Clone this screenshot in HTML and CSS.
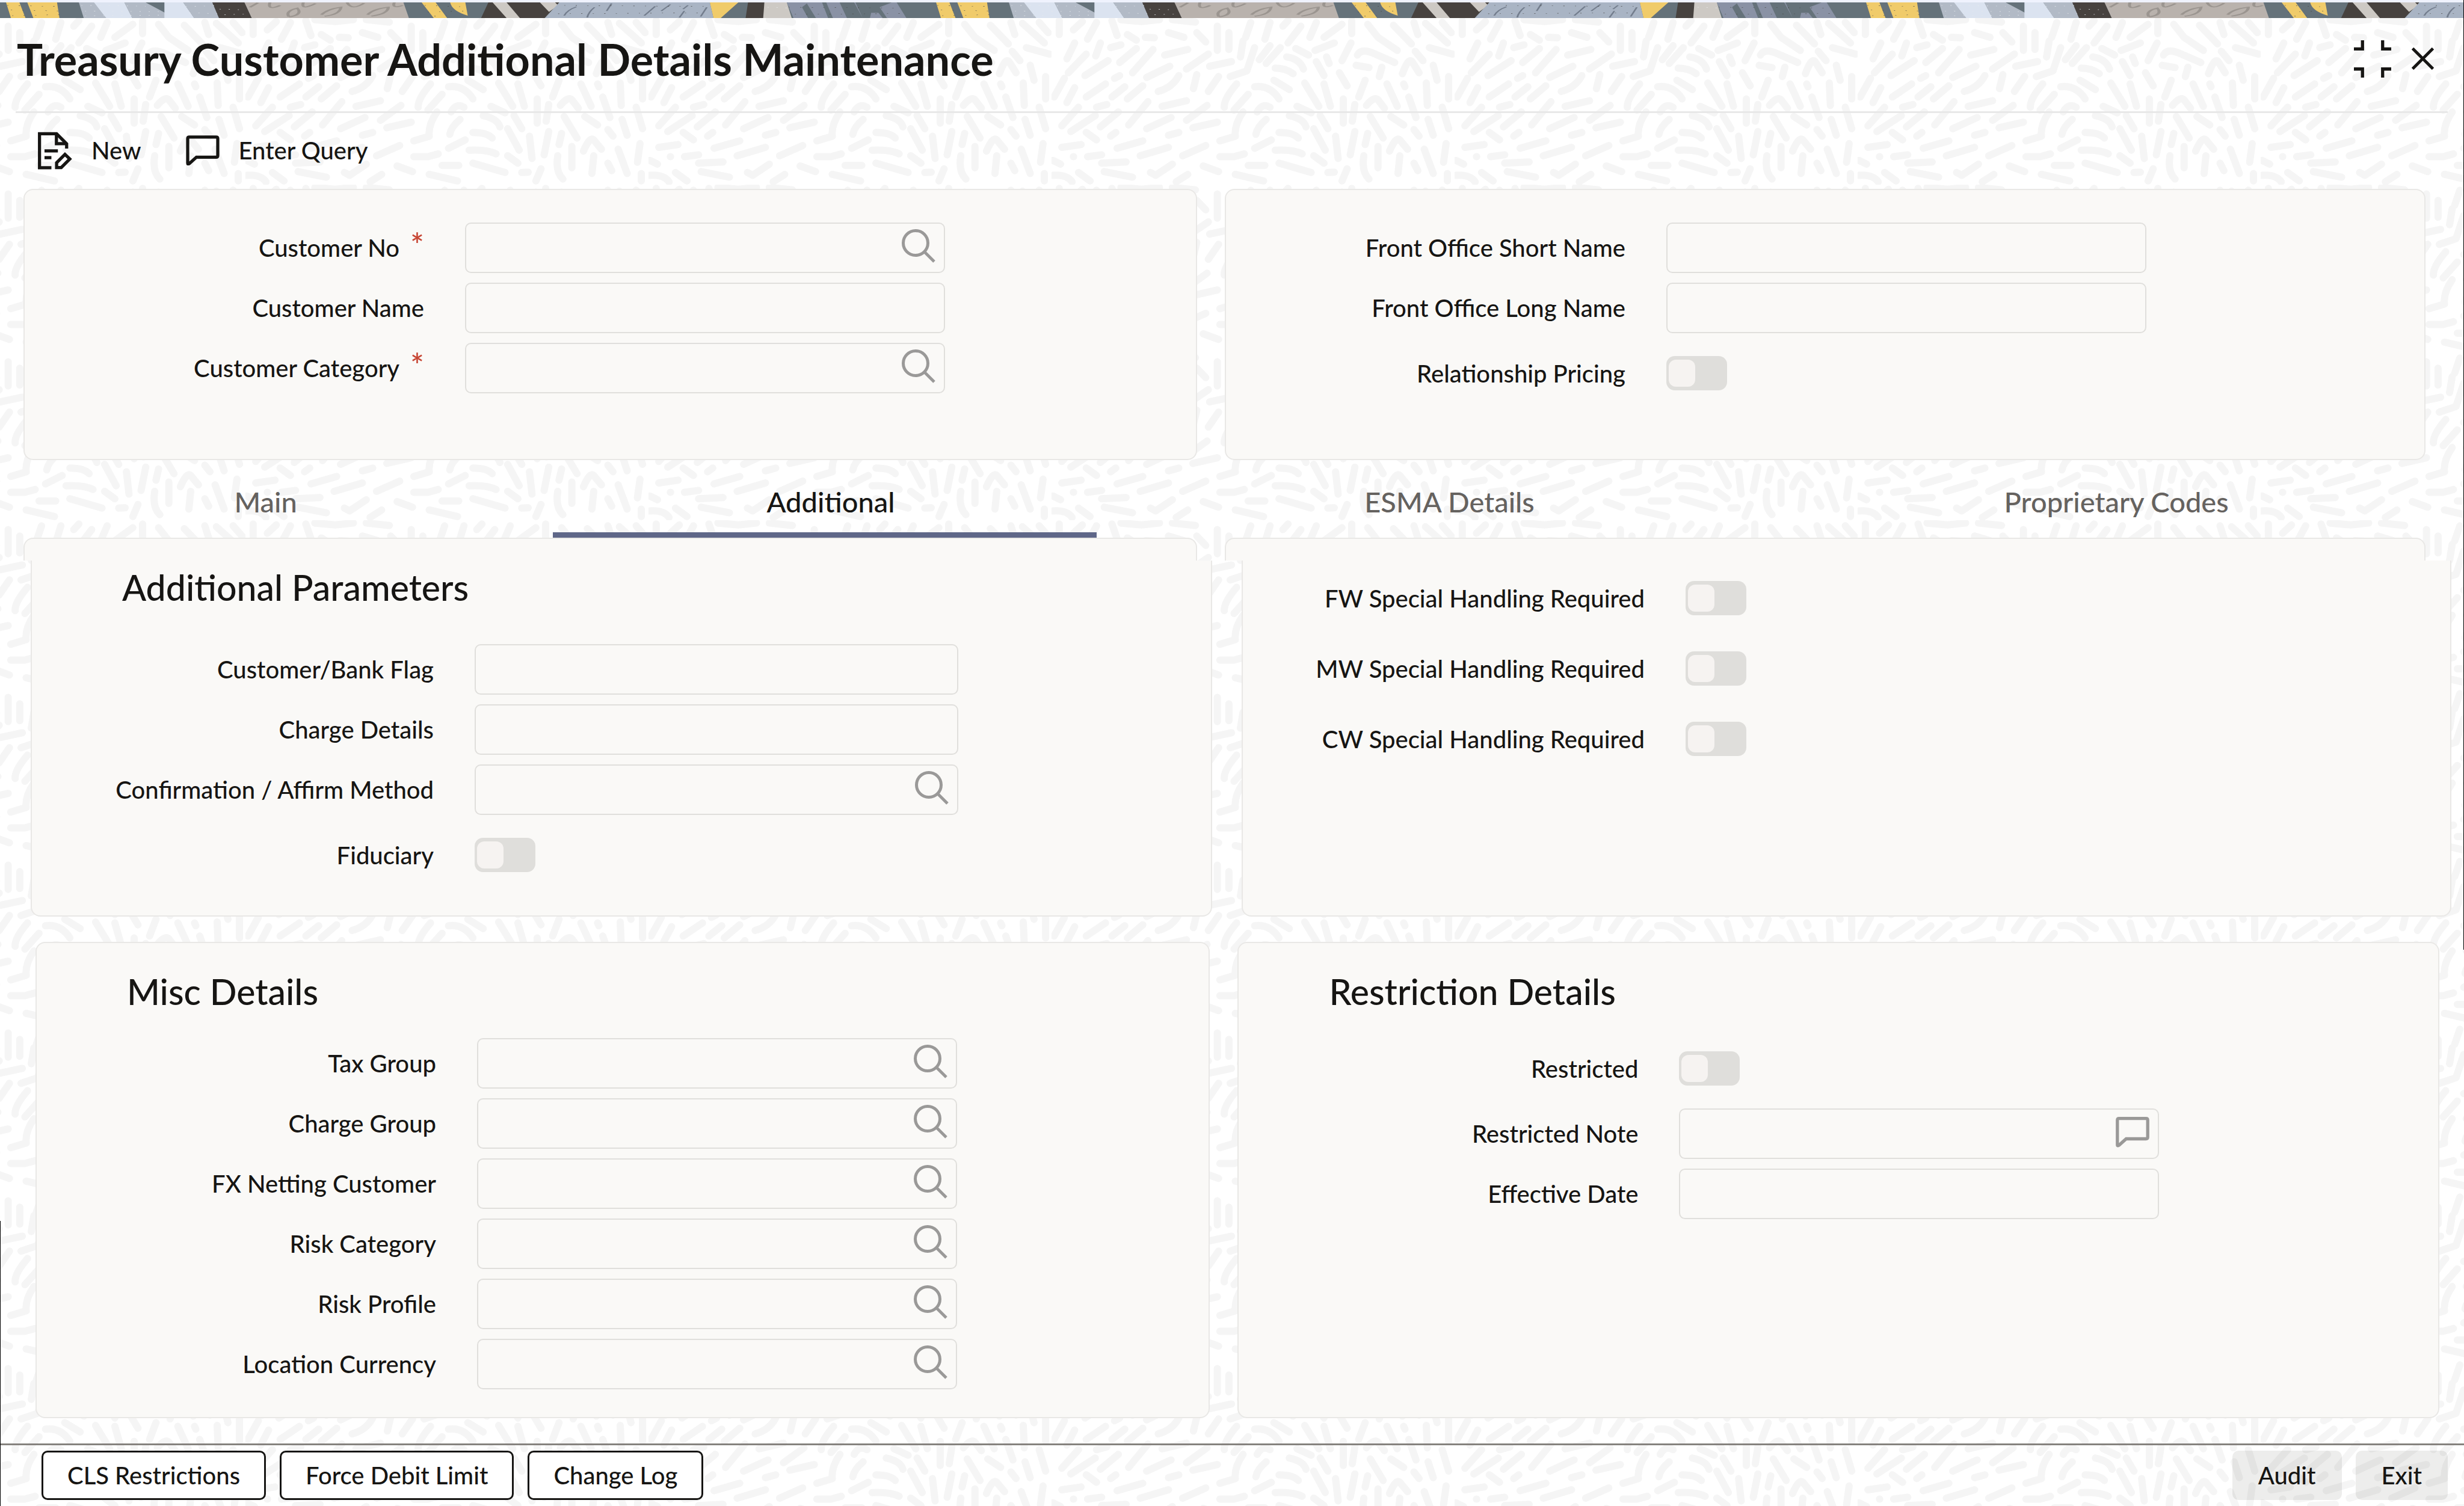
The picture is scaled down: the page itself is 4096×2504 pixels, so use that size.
FILE: index.html
```html
<!DOCTYPE html>
<html lang="en">
<head>
    <meta charset="utf-8">
    <title>Treasury Customer Additional Details Maintenance</title>
    <link rel="stylesheet" href="styles.css">
</head>
<body>

    <!-- Shared icons -->
    <svg class="sprite" aria-hidden="true">
        <symbol id="icon-search" viewBox="0 0 56 56">
            <circle cx="23" cy="23" r="20.500" fill="none" stroke="currentColor" stroke-width="5"/>
            <path d="M38 38L54 54" fill="none" stroke="currentColor" stroke-width="5"/>
        </symbol>
        <symbol id="icon-note" viewBox="0 0 180 162">
            <path d="M9 150V18Q9 9 18 9H162Q171 9 171 18V109Q171 118 162 118H56L18 152Q9 158 9 150Z" fill="none" stroke="currentColor" stroke-width="17"/>
        </symbol>
        <symbol id="icon-new" viewBox="80 40 186 204">
            <g fill="none" stroke="currentColor" stroke-width="17">
                <path d="M155 234H91V51H183L237 105V131"/>
                <path d="M182 51V104H236"/>
                <path d="M118 143H190M118 180H155"/>
                <path d="M183 233V207L228 162L254 187L208 233Z"/>
            </g>
        </symbol>
        <symbol id="icon-restore" viewBox="0 0 200 200">
            <path d="M0 46H46V0M154 0V46H200M0 154H46V200M154 200V154H200" fill="none" stroke="currentColor" stroke-width="17"/>
        </symbol>
        <symbol id="icon-close" viewBox="0 0 120 120">
            <path d="M5 5L115 115M115 5L5 115" fill="none" stroke="currentColor" stroke-width="16"/>
        </symbol>
    </svg>

    <div class="page">
        <div class="banner"></div>

        <header class="header">
            <h1>Treasury Customer Additional Details Maintenance</h1>
            <div class="window-buttons">
                <button class="restore" aria-label="Restore"><svg><use href="#icon-restore"/></svg></button>
                <button class="close" aria-label="Close"><svg><use href="#icon-close"/></svg></button>
            </div>
        </header>

        <div class="toolbar">
            <button><svg class="new"><use href="#icon-new"/></svg>New</button>
            <button><svg class="note"><use href="#icon-note"/></svg>Enter Query</button>
        </div>

        <main>
            <!-- Customer -->
            <div class="columns">
                <section class="panel">
                    <div class="row required">
                        <label for="customerNo">Customer No</label>
                        <div class="control"><input type="text" id="customerNo"><button aria-label="Search Customer No"><svg><use href="#icon-search"/></svg></button></div>
                    </div>
                    <div class="row">
                        <label for="customerName">Customer Name</label>
                        <div class="control"><input type="text" id="customerName"></div>
                    </div>
                    <div class="row required">
                        <label for="customerCategory">Customer Category</label>
                        <div class="control"><input type="text" id="customerCategory"><button aria-label="Search Customer Category"><svg><use href="#icon-search"/></svg></button></div>
                    </div>
                </section>
                <section class="panel">
                    <div class="row">
                        <label for="shortName">Front Office Short Name</label>
                        <div class="control"><input type="text" id="shortName"></div>
                    </div>
                    <div class="row">
                        <label for="longName">Front Office Long Name</label>
                        <div class="control"><input type="text" id="longName"></div>
                    </div>
                    <div class="row switch-row">
                        <label for="pricing">Relationship Pricing</label>
                        <input type="checkbox" class="switch" id="pricing">
                    </div>
                </section>
            </div>

            <nav class="tabs" role="tablist">
                <button role="tab">Main</button>
                <button role="tab" class="active" aria-selected="true">Additional</button>
                <button role="tab">ESMA Details</button>
                <button role="tab">Proprietary Codes</button>
            </nav>

            <!-- Additional tab -->
            <div class="columns lip">
                <div class="panel"></div>
                <div class="panel"></div>
            </div>
            <div class="columns parameters">
                <section class="panel">
                    <h2>Additional Parameters</h2>
                    <div class="row">
                        <label for="bankFlag">Customer/Bank Flag</label>
                        <div class="control"><input type="text" id="bankFlag"></div>
                    </div>
                    <div class="row">
                        <label for="chargeDetails">Charge Details</label>
                        <div class="control"><input type="text" id="chargeDetails"></div>
                    </div>
                    <div class="row">
                        <label for="affirmMethod">Confirmation / Affirm Method</label>
                        <div class="control"><input type="text" id="affirmMethod"><button aria-label="Search Method"><svg><use href="#icon-search"/></svg></button></div>
                    </div>
                    <div class="row switch-row">
                        <label for="fiduciary">Fiduciary</label>
                        <input type="checkbox" class="switch" id="fiduciary">
                    </div>
                </section>
                <section class="panel">
                    <div class="row switch-row">
                        <label for="fw">FW Special Handling Required</label>
                        <input type="checkbox" class="switch" id="fw">
                    </div>
                    <div class="row switch-row">
                        <label for="mw">MW Special Handling Required</label>
                        <input type="checkbox" class="switch" id="mw">
                    </div>
                    <div class="row switch-row">
                        <label for="cw">CW Special Handling Required</label>
                        <input type="checkbox" class="switch" id="cw">
                    </div>
                </section>
            </div>

            <div class="columns details">
                <section class="panel">
                    <h2>Misc Details</h2>
                    <div class="row">
                        <label for="taxGroup">Tax Group</label>
                        <div class="control"><input type="text" id="taxGroup"><button aria-label="Search Tax Group"><svg><use href="#icon-search"/></svg></button></div>
                    </div>
                    <div class="row">
                        <label for="chargeGroup">Charge Group</label>
                        <div class="control"><input type="text" id="chargeGroup"><button aria-label="Search Charge Group"><svg><use href="#icon-search"/></svg></button></div>
                    </div>
                    <div class="row">
                        <label for="fxNetting">FX Netting Customer</label>
                        <div class="control"><input type="text" id="fxNetting"><button aria-label="Search FX Netting Customer"><svg><use href="#icon-search"/></svg></button></div>
                    </div>
                    <div class="row">
                        <label for="riskCategory">Risk Category</label>
                        <div class="control"><input type="text" id="riskCategory"><button aria-label="Search Risk Category"><svg><use href="#icon-search"/></svg></button></div>
                    </div>
                    <div class="row">
                        <label for="riskProfile">Risk Profile</label>
                        <div class="control"><input type="text" id="riskProfile"><button aria-label="Search Risk Profile"><svg><use href="#icon-search"/></svg></button></div>
                    </div>
                    <div class="row">
                        <label for="currency">Location Currency</label>
                        <div class="control"><input type="text" id="currency"><button aria-label="Search Location Currency"><svg><use href="#icon-search"/></svg></button></div>
                    </div>
                </section>
                <section class="panel">
                    <h2>Restriction Details</h2>
                    <div class="row switch-row">
                        <label for="restricted">Restricted</label>
                        <input type="checkbox" class="switch" id="restricted">
                    </div>
                    <div class="row">
                        <label for="restrictedNote">Restricted Note</label>
                        <div class="control"><input type="text" id="restrictedNote"><button aria-label="Edit Restricted Note"><svg><use href="#icon-note"/></svg></button></div>
                    </div>
                    <div class="row">
                        <label for="effectiveDate">Effective Date</label>
                        <div class="control"><input type="text" id="effectiveDate"></div>
                    </div>
                </section>
            </div>
        </main>

        <footer class="footer">
            <button>CLS Restrictions</button>
            <button>Force Debit Limit</button>
            <button>Change Log</button>
            <button class="plain first">Audit</button>
            <button class="plain">Exit</button>
        </footer>
    </div>

</body>
</html>
```
FILE: styles.css
```css
* { box-sizing: border-box; }
body { margin: 0; font-family: Lato, "Noto Sans", sans-serif; font-size: 40px; font-weight: 500; line-height: 52px; color: #161513; background-color: white; }
button, input { font: inherit; color: inherit; margin: 0; }
button { background: none; border: none; padding: 0; cursor: pointer; }
svg { display: block; }
.sprite { display: none; }

.page {
    position: relative; min-height: 100vh; display: flex; flex-direction: column;
    background-position: 2418px 28px; background-size: 670px 279px;
    background-image: url("data:image/svg+xml,<svg xmlns='http://www.w3.org/2000/svg' viewBox='0 0 1568 900' preserveAspectRatio='none'><path vector-effect='non-scaling-stroke' fill='none' stroke='%23f5f5f5' stroke-width='12' stroke-linecap='round' stroke-linejoin='round' d='M30 20V95M85 70L120 25M140 120L175 30M235 20L255 100M270 15L350 25L420 15M470 15L560 28M295 95L330 125M365 110L400 112M455 85L515 110M565 85L600 135M645 50V180M690 85V175M775 30L755 110M850 30L830 120M900 50L920 20M970 50L920 140M1030 30L1005 110M1130 40L1060 110M1168 20V90M230 165L270 150M90 140L60 225M190 140L172 210M135 200L65 300M330 170L265 245M395 175L315 300M440 205L530 175M610 200L525 280M745 130L735 215M850 155L808 230M890 165L835 250M950 170L1000 205M1025 180L1100 140M1165 140L1130 235M1070 215L1080 250M1230 40L1270 110L1345 180M1330 45L1400 145M1410 30L1425 95M1455 35L1540 140M1520 30L1555 85M1470 165L1560 200M1190 205Q1205 165 1260 200L1335 245M1415 185L1445 235M1365 305Q1390 210 1405 245L1430 300M220 235L130 315M460 265L370 325M615 265L700 240M790 165L760 290L695 320M915 215Q965 225 980 280M870 275Q910 275 940 305M1030 240L1060 315M1185 260L1235 272M1285 270L1275 320M1485 260L1500 340M50 330L10 430M245 330L265 315M495 315Q470 380 415 400M565 310L552 385M650 320L610 400M865 340L925 390M1120 300L1150 370M985 355L1040 480M1060 360L1085 480M1220 340L1195 430M1305 360L1345 480M1370 360L1375 375M1458 355L1462 475M1545 320V440M210 360L135 430M285 375L235 430M90 380L60 460M355 370L295 440M720 360Q670 440 672 485M765 415L710 500M790 375Q850 365 885 440M1225 475Q1255 425 1270 445L1295 490M1390 430L1418 540M175 485L215 470M375 455L300 580M430 480L525 450M605 475L525 555M800 510Q820 460 850 485M955 480L1010 515M1135 440V570M1180 470L1170 560M1520 485L1545 600M105 485L40 585M170 530L75 615M260 510L190 590M465 540L370 600M550 595L645 565M745 510Q710 580 715 640L655 665M835 550Q800 590 795 630M925 530Q980 545 990 590M1045 530L1075 600M1240 535L1290 650M1320 535L1370 580M1465 550L1485 635M1410 605L1430 640M135 620L175 660M230 640L250 620M455 635L495 620M855 660L790 705M885 620Q940 620 960 650M1020 600L1065 715M1105 640L1115 760M1180 615L1162 740M1230 625L1220 685M1315 720Q1340 640 1355 660L1385 710M40 700L115 685M255 705L355 665M345 745L455 700M600 690L510 745M870 715Q940 710 975 735M655 750H710L750 735M85 750H86M140 750L195 740M1020 745L1060 785M1270 695V810M1450 710L1485 840M1535 680L1525 780M5 770L35 790M195 785L290 778M205 830L315 860M470 790L405 850L385 835M590 800L650 830M765 797H830M885 785L1010 835M715 845L825 880M1075 835L1100 833M1150 815L1130 880M1215 745Q1205 830 1235 870M1355 745L1348 840M1410 785L1425 825M1540 840V880M5 850Q60 845 80 885M105 835L150 880M530 845L485 885'/></svg>");
}
/* Window edges */
.page::before, .page::after { content: ""; position: absolute; width: 1px; background-color: black; }
.page::before { left: 0; top: 81%; bottom: 0; }
.page::after { right: 0; top: 0; height: 63%; }

.banner {
    height: 30px; border-top: 4px solid #eff2fd; background-size: 1546px 26px;
    background-image: url("data:image/svg+xml,<svg xmlns='http://www.w3.org/2000/svg' viewBox='0 14 1533 84' preserveAspectRatio='none'><path fill='%2365727a' d='M0 14H1533V98H0Z'/><path fill='%23f0cb6a' d='M10 14L18 98H42L32 14ZM45 14L55 98H98L94 14ZM695 14L715 98H737L718 14ZM742 14Q745 60 771 85L767 14ZM1170 14L1176 98H1188L1217 14Z'/><path fill='%23b2bac6' d='M130 14L138 98H175L158 14ZM205 14L218 98H272V70L240 14ZM302 14L320 98H361L350 14Z'/><path fill='%23dbe3f0' d='M155 14L175 98H218L205 14ZM271 14V98H320L302 14Z'/><path fill='%2347423f' d='M350 14L361 98H415L403 14ZM805 14L793 98H898L922 14ZM1233 14L1229 98H1260V14Z'/><path fill='%23b9b2ad' d='M403 14L415 98H674L665 14Z'/><path fill='%23cdc9c4' d='M812 14L835 98H857L835 14ZM890 14L905 65L920 30L915 14ZM1260 14L1258 98H1305L1297 14Z'/><path fill='%23a9b4c4' d='M922 14L898 98H1176L1170 14Z'/><path fill='%238a92a5' d='M1297 14L1308 98H1332L1322 40L1330 20L1345 98H1365L1355 14ZM1362 14L1373 98H1396L1384 14ZM1408 14L1422 98H1455L1448 70H1436L1434 98H1422L1410 14H1470L1450 40L1462 98H1494L1478 14Z'/><path fill='none' stroke='%239b9590' stroke-width='5' d='M412 40L425 16M445 14Q440 60 462 30M476 90Q470 60 490 45Q500 80 476 92M500 14Q495 60 520 20M530 80Q540 50 562 40Q560 80 535 88M572 14Q580 60 600 18M606 80Q615 50 640 40Q640 75 612 88M650 14Q645 50 664 30'/><path fill='none' stroke='%23737d8d' stroke-width='3' d='M930 85Q935 55 950 38M968 95Q970 65 980 40M1000 60L1008 20M1062 85L1080 35M1090 60L1105 25M1120 95L1128 60M1126 50L1134 30M1155 90L1165 40'/><path fill='none' stroke='%234a4a48' stroke-width='2' stroke-dasharray='2 17' d='M12 30L96 36M18 55L98 60M20 85L98 80M700 30L770 38M705 66L765 60M716 88L736 86M930 30L1160 36M920 75L1165 70M1300 40L1480 44M1310 78L1490 74'/><path fill='none' stroke='%23e8eaee' stroke-width='2' stroke-dasharray='2 13' d='M134 30L240 34M140 60L262 64M140 86L270 82M306 36L354 32M312 70L358 74M362 50L404 54M370 80L410 76M1265 40L1300 44'/></svg>");
}

.header { display: flex; align-items: center; justify-content: space-between; height: 158px; margin: 0 27px 0 26px; padding: 0 23px 20px 2px; border-bottom: 3px solid #e8e8e8; }
.header h1 { margin: 0; font-size: 72px; line-height: 88px; font-weight: 700; }
.window-buttons { display: flex; align-items: center; gap: 34px; }
.restore svg { width: 62px; height: 62px; }
.close svg { width: 37px; height: 37px; }

.toolbar { display: flex; align-items: center; gap: 74px; height: 124px; margin-bottom: 2px; padding-left: 62px; }
.toolbar button { display: flex; align-items: center; gap: 32px; }
.toolbar .new { width: 58px; height: 63px; }
.toolbar .note { width: 56px; height: 50px; }

.columns { display: grid; grid-template-columns: 1951fr 1996fr; gap: 46px; padding: 0 64px 0 39px; }
.panel { background-color: #faf9f7; border: 2px solid #e9e8e6; border-radius: 16px; padding: 54px 0 92px; }
.panel h2 { margin: 0 0 44px 150px; font-size: 59px; line-height: 66px; font-weight: 500; }

.row { display: flex; align-items: center; height: 84px; margin-bottom: 16px; }
.row:last-child { margin-bottom: 0; }
.row label { width: 664px; margin-right: 68px; text-align: right; }
.switch-row { height: 101px; }
.required label::after { content: "*"; color: #c74634; margin-left: 18px; font-size: 54px; line-height: 40px; }

.control { display: flex; align-items: center; width: 798px; height: 84px; padding-right: 14px; border: 2px solid #e0dfdc; border-radius: 10px; }
.control input { flex: 1; min-width: 0; height: 100%; padding: 0 20px; border: none; outline: none; background: none; }
.control button { color: #9a9998; padding-bottom: 6px; }
.control svg { width: 56px; height: 56px; }

.switch { appearance: none; display: flex; align-items: center; width: 101px; height: 57px; padding: 4px; border-radius: 14px; background-color: #dfdedb; }
.switch::before { content: ""; width: 44px; height: 45px; border-radius: 12px; background-color: #f6f3f1; }

.tabs { display: flex; height: 129px; }
.tabs button { flex: 1 1 auto; margin: 0 56px 0 34px; padding: 8px 0 0 20px; border-top: 9px solid transparent; border-bottom: 9px solid transparent; font-size: 47px; color: #65625f; }
.tabs .active { border-bottom-color: #5f6788; color: #161513; }

.lip .panel { height: 38px; padding: 0; border-bottom: none; border-radius: 16px 16px 0 0; }
.parameters { grid-template-columns: 1964fr 2011fr; gap: 49px; padding: 0 21px 0 51px; margin-bottom: 42px; }
.parameters .panel { border-top: none; border-radius: 0 0 16px 16px; padding: 12px 0 50px; }
.parameters h2 { margin-bottom: 61px; }
.parameters label { width: 668px; }
.parameters .control { width: 804px; }
.details { padding: 0 41px 0 59px; margin-bottom: 42px; }
.details .panel { padding: 48px 0 46px; }

.footer { display: flex; gap: 23px; margin-top: auto; padding: 9px 27px 12px 69px; border-top: 3px solid #85827e; }
.footer button { height: 82px; padding: 0 40px; border: 3px solid #161513; border-radius: 10px; background-color: white; }
.footer .plain { border-color: transparent; background-color: rgba(22, 21, 19, 0.08); }
.footer .first { margin-left: auto; }
```
